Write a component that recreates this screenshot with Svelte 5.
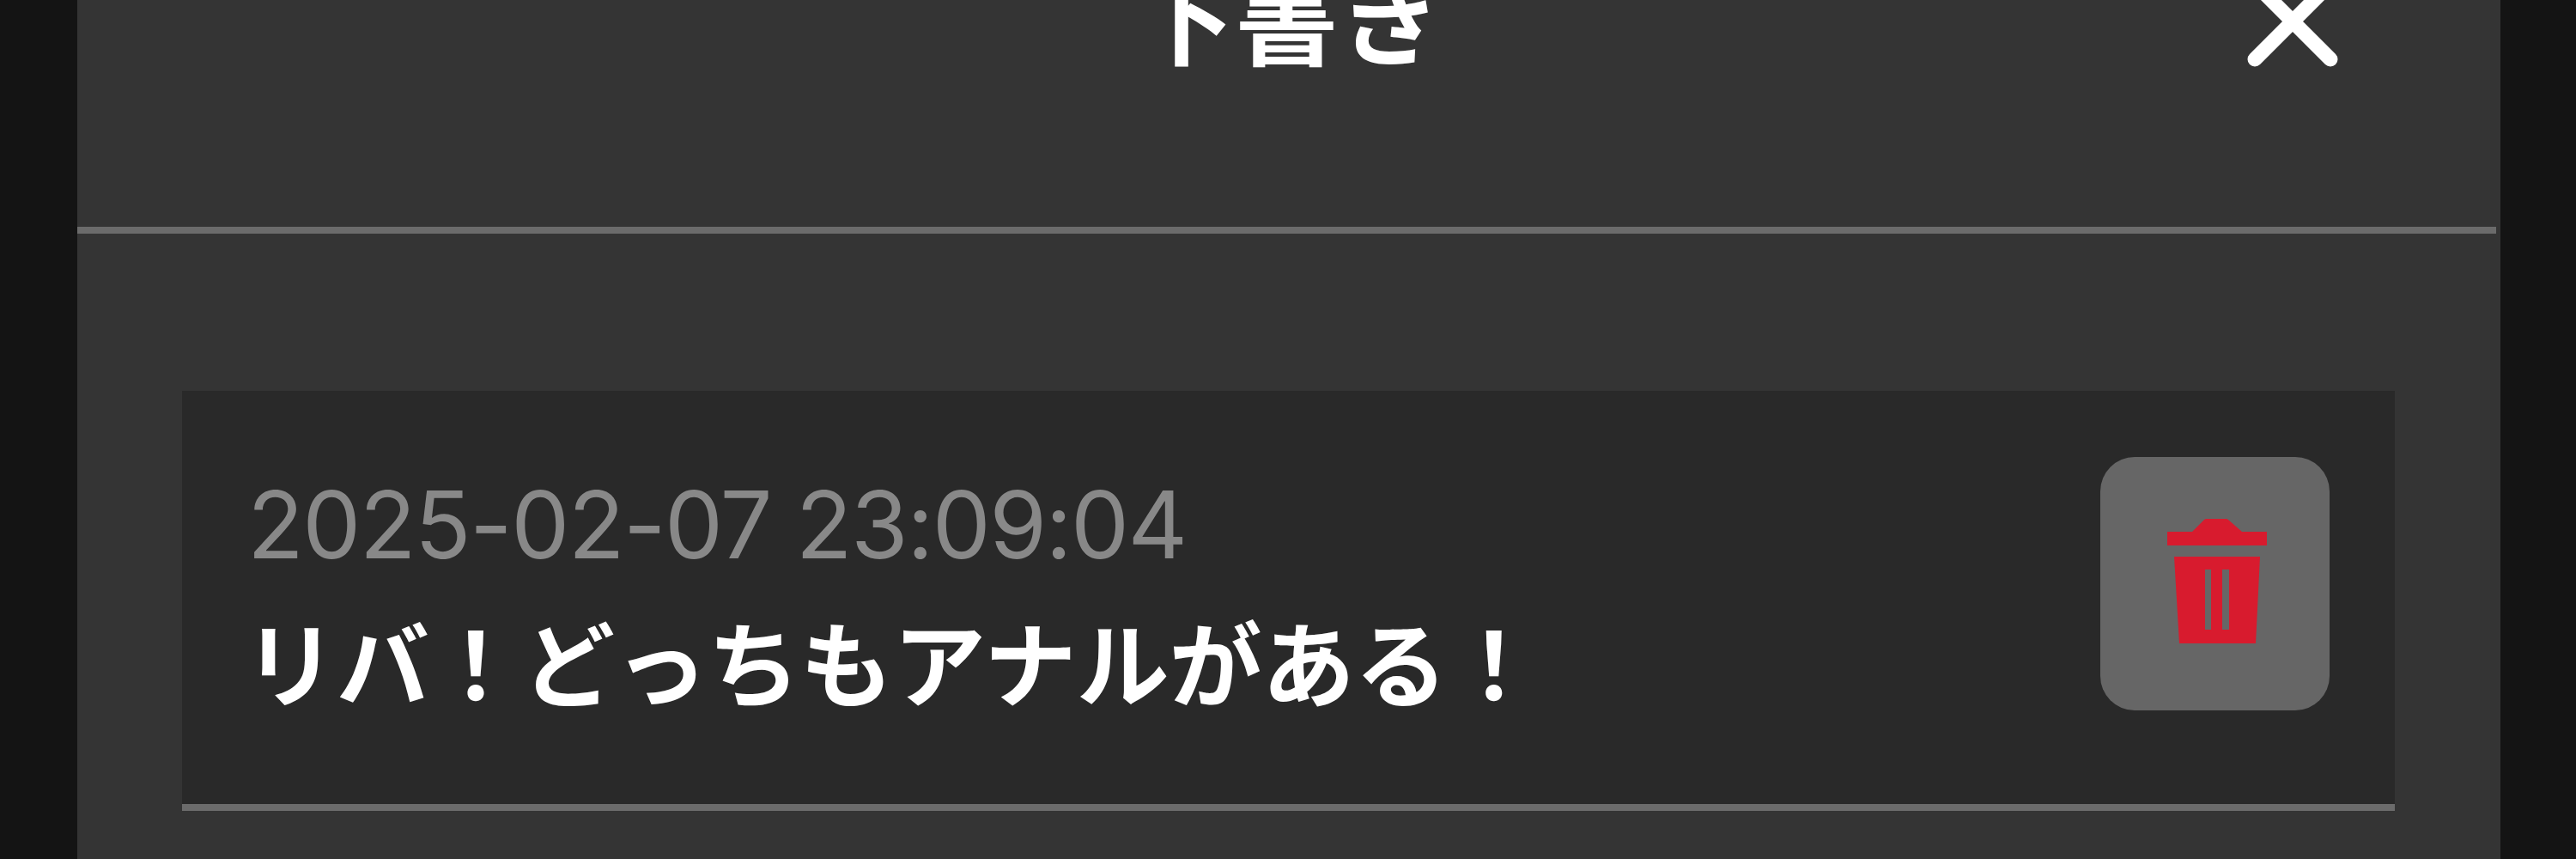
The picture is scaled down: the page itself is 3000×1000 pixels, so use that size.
<script>
  // Draft list shown in the sheet
  let drafts = [
    { id: 1, date: '2025-02-07 23:09:04', text: 'リバ！どっちもアナルがある！' }
  ];
</script>

<div class="page">
  <section class="sheet">
    <header class="sheet-header">
      <span></span>
      <h2 class="sheet-title">下書き</h2>
      <button class="close-btn" aria-label="閉じる">
        <svg viewBox="0 0 106 106" width="106" height="106">
          <path d="M9 97 L97 9 M9 9 L97 97" fill="none" stroke="#fff" stroke-width="17" stroke-linecap="round" />
        </svg>
      </button>
    </header>

    <ul class="draft-list">
      {#each drafts as draft (draft.id)}
        <li class="draft-item">
          <div class="draft-body">
            <div class="draft-date">{draft.date}</div>
            <div class="draft-text">{draft.text}</div>
          </div>
          <button class="delete-btn" aria-label="削除">
            <svg viewBox="0 0 116 145" width="116" height="145">
              <path d="M0 15 H29 L43 1 Q44 0 46 0 H68 Q70 0 71 1 L87 15 H116 V31 H0 Z" fill="#d81b2e" />
              <path fill-rule="evenodd" d="M8 44 H108 L103 145 H14 Z M44 59 V129 H51 V59 Z M64 59 V129 H72 V59 Z" fill="#d81b2e" />
            </svg>
          </button>
        </li>
      {/each}
    </ul>
  </section>
</div>

<style>
  :global(body) {
    background-color: #141414;
    overflow: hidden;
  }

  .page {
    height: 1000px;
    padding: 0 88px 0 90px;
    overflow: hidden;
    font-family: Inter, "Noto Sans CJK JP", sans-serif;
  }

  .sheet {
    height: 1214px;
    margin-top: -214px;
    background-color: #343434;
  }

  .sheet-header {
    display: grid;
    grid-template-columns: 1fr auto 1fr;
    align-items: center;
    height: 478px;
    margin-right: 5px;
    padding: 0 184px;
    border-bottom: 8px solid #6b6b6b;
  }

  .sheet-title {
    margin: 0 0 20px;
    color: #fff;
    font-family: "Noto Sans CJK JP", sans-serif;
    font-size: 120px;
    font-weight: 700;
    line-height: 1;
  }

  .close-btn {
    justify-self: end;
    display: flex;
    padding: 0;
    border: none;
    background: none;
  }

  .draft-list {
    list-style: none;
    margin: 0;
    padding: 183px 123px 0 122px;
  }

  .draft-item {
    display: flex;
    align-items: flex-start;
    justify-content: space-between;
    height: 489px;
    box-sizing: border-box;
    padding: 77px 76px 0 72px;
    background-color: #292929;
    border-bottom: 8px solid #6b6b6b;
  }

  .draft-date {
    margin: 14px 0 0 4px;
    color: #888;
    font-size: 108px;
    line-height: 1.2;
    letter-spacing: -1.6px;
  }

  .draft-text {
    margin-top: 28px;
    color: #fff;
    font-family: "Noto Sans CJK JP", sans-serif;
    font-size: 108px;
    font-weight: 700;
    line-height: 1.2;
  }

  .delete-btn {
    display: flex;
    align-items: center;
    justify-content: center;
    flex-shrink: 0;
    width: 267px;
    height: 295px;
    padding: 0 0 6px 5px;
    border: none;
    border-radius: 40px;
    background-color: #666;
  }
</style>
